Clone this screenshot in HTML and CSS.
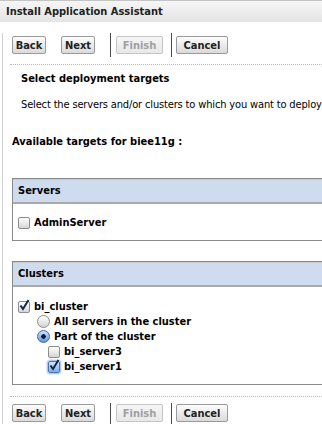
FILE: index.html
```html
<!DOCTYPE html>
<html lang="en">
<head>
    <meta charset="UTF-8">
    <title>Install Application Assistant</title>
    <link rel="stylesheet" href="styles.css">
</head>
<body>
    <div class="title-bar">Install Application Assistant</div>
    <div class="page">
        <div class="toolbar">
            <button class="btn btn-back">Back</button>
            <button class="btn btn-next">Next</button>
            <span class="sep"></span>
            <button class="btn btn-finish" disabled>Finish</button>
            <span class="sep"></span>
            <button class="btn btn-cancel">Cancel</button>
        </div>

        <div class="step">
            <h2>Select deployment targets</h2>
            <p>Select the servers and/or clusters to which you want to deploy</p>
        </div>

        <h3 class="targets">Available targets for biee11g :</h3>

        <div class="panel panel-servers">
            <div class="panel-head">Servers</div>
            <div class="panel-body">
                <div class="row"><span class="cb"></span>AdminServer</div>
            </div>
        </div>

        <div class="panel panel-clusters">
            <div class="panel-head">Clusters</div>
            <div class="panel-body">
                <div class="row"><span class="cb checked"><svg viewBox="0 0 12 12"><path d="M2.5 5.5 L5 9 L10.5 0"/></svg></span>bi_cluster</div>
                <div class="row lvl1"><span class="rb"></span>All servers in the cluster</div>
                <div class="row lvl1"><span class="rb selected"></span>Part of the cluster</div>
                <div class="row lvl2"><span class="cb"></span>bi_server3</div>
                <div class="row lvl2"><span class="cb checked focus"><svg viewBox="0 0 12 12"><path d="M2.5 5.5 L5 9 L10.5 0"/></svg></span>bi_server1</div>
            </div>
        </div>

        <div class="toolbar toolbar-bottom">
            <button class="btn btn-back">Back</button>
            <button class="btn btn-next">Next</button>
            <span class="sep"></span>
            <button class="btn btn-finish" disabled>Finish</button>
            <span class="sep"></span>
            <button class="btn btn-cancel">Cancel</button>
        </div>
    </div>
</body>
</html>
```

FILE: styles.css
```css
body {
    margin: 0;
    padding: 0;
    font-family: "DejaVu Sans Condensed", "DejaVu Sans", sans-serif;
    font-size: 11px;
    color: #000;
    background-color: #fff;
    overflow: hidden;
}

.title-bar {
    height: 21px;
    line-height: 21px;
    border-top: 1px solid #c4c4c4;
    padding-left: 6px;
    font-weight: bold;
    font-size: 11px;
    color: #222;
    background: linear-gradient(#f6f6f6, #e4e4e4);
    white-space: nowrap;
}

.page {
    margin-left: 2px;
    border-left: 1px solid #cfcfcf;
    padding-left: 7px;
    width: 400px;
}

/* button rows */
.toolbar {
    display: flex;
    align-items: center;
    height: 24px;
    margin-top: 11px;
    padding-left: 2px;
    padding-bottom: 7px;
    border-bottom: 1px dotted #b8b8b8;
}

.toolbar-bottom {
    height: auto;
    margin-top: 11px;
    padding-top: 6px;
    padding-bottom: 0;
    border-bottom: none;
    border-top: 1px dotted #b8b8b8;
    align-items: flex-start;
}

.btn {
    height: 18px;
    padding: 0;
    margin: 0;
    font-family: inherit;
    font-size: 11px;
    font-weight: bold;
    color: #222;
    border: 1px solid #9a9a9a;
    border-radius: 2px;
    background: linear-gradient(#fdfdfd, #dadada);
}

.toolbar-bottom .btn {
    margin-top: 1px;
}

.btn-back,
.btn-next {
    width: 34px;
}

.btn-next {
    margin-left: 15px;
}

.btn-finish {
    width: 47px;
}

.btn-cancel {
    width: 52px;
}

.btn[disabled] {
    color: #a0a0a0;
    border-color: #c4c4c4;
    background: linear-gradient(#f6f6f6, #e8e8e8);
}

.sep {
    width: 1px;
    height: 24px;
    background-color: #4a4a4a;
    margin: 0 5px 0 15px;
}

.btn[disabled] + .sep {
    margin: 0 4px 0 8px;
}

/* intro text */
.step {
    padding-left: 11px;
    white-space: nowrap;
}

.step h2 {
    font-size: 11px;
    line-height: 14px;
    margin: 7px 0 12px;
}

.step p {
    margin: 0;
    line-height: 14px;
    letter-spacing: -0.15px;
}

.targets {
    font-size: 11px;
    line-height: 14px;
    margin: 23px 0 29px 2px;
}

/* panels */
.panel {
    margin-left: 2px;
    border: 1px solid #8a8a8a;
    box-shadow: inset 0 1px #c9c9c9;
}

.panel-head {
    height: 22px;
    line-height: 22px;
    margin-top: 1px;
    padding-left: 5px;
    font-weight: bold;
    background-color: #cfdcef;
    border-bottom: 2px solid #a9a9a9;
}

.panel-servers .panel-body {
    padding: 11px 5px 10px;
}

.panel-clusters {
    margin-top: 20px;
}

.panel-clusters .panel-body {
    padding: 12px 5px 10px;
}

.row {
    display: flex;
    align-items: center;
    gap: 4px;
    height: 15px;
    font-weight: bold;
    white-space: nowrap;
}

.lvl1 {
    padding-left: 19px;
}

.lvl2 {
    padding-left: 30px;
}

/* checkbox and radio */
.cb {
    display: inline-flex;
    box-sizing: border-box;
    width: 12px;
    height: 12px;
    border: 1px solid #8c8c8c;
    border-radius: 2px;
    background: linear-gradient(#ffffff, #d6d6d6);
}

.cb svg {
    width: 12px;
    height: 12px;
    margin: -2px 0 0 -1px;
    overflow: visible;
    fill: none;
    stroke: #13254f;
    stroke-width: 2;
}

.cb.focus {
    border-color: #4a76b4;
    background: linear-gradient(#d4e5fb, #7eaee8);
    box-shadow: 0 0 2px 1px #8fb4e6;
}

.rb {
    display: inline-block;
    box-sizing: border-box;
    width: 13px;
    height: 13px;
    border: 1px solid #8c8c8c;
    border-radius: 50%;
    background: linear-gradient(#ffffff, #d4d4d4);
}

.rb.selected {
    border-color: #3f6aa8;
    background: radial-gradient(circle, #101b33 0 2px, transparent 2.5px), linear-gradient(#cfe2fa, #5e96dc);
}
```
